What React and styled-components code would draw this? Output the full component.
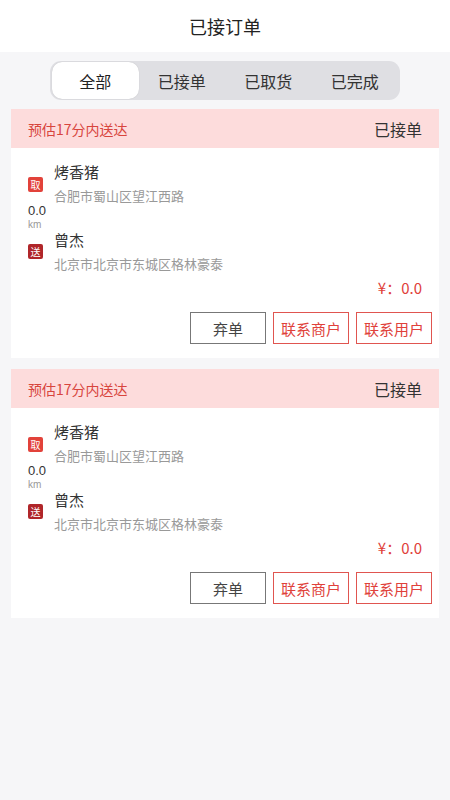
import React from "react";
import styled, { createGlobalStyle } from "styled-components";

const Global = createGlobalStyle`
  html, body { margin: 0; padding: 0; background: #f6f6f8; }
  body { font-family: "Noto Sans CJK SC", "Noto Sans", sans-serif; }
  * { box-sizing: border-box; }
`;

const Page = styled.div`
  min-height: 800px;
  background: #f6f6f8;
`;

const Header = styled.header`
  height: 52px;
  background: #fff;
  display: flex;
  align-items: center;
  justify-content: center;
  font-size: 18px;
  color: #222;
`;

const Tabs = styled.div`
  margin: 9px auto 0;
  width: 350px;
  height: 39px;
  background: #dfdfe3;
  border-radius: 11px;
  padding: 1px 2px;
  display: grid;
  grid-template-columns: repeat(4, 1fr);
`;

const Tab = styled.div`
  display: flex;
  align-items: center;
  justify-content: center;
  font-size: 16px;
  color: ${(p) => (p.$active ? "#222" : "#333")};
  background: ${(p) => (p.$active ? "#fff" : "transparent")};
  border-radius: 10px;
  box-shadow: ${(p) => (p.$active ? "0 0 1px rgba(0,0,0,0.2)" : "none")};
`;

const List = styled.div`
  display: flex;
  flex-direction: column;
  gap: 11px;
  padding: 9px 11px 0;
`;

const Card = styled.div`
  background: #fff;
`;

const CardHead = styled.div`
  height: 39px;
  background: #fddcdc;
  display: flex;
  align-items: center;
  justify-content: space-between;
  padding: 0 17px;
`;

const Eta = styled.span`
  font-size: 14px;
  color: #d8453d;
`;

const Status = styled.span`
  font-size: 16px;
  color: #333;
`;

const Body = styled.div`
  padding: 0 7px 14px 17px;
  display: flex;
  flex-direction: column;
`;

const Route = styled.div`
  display: flex;
`;

const Side = styled.div`
  width: 26px;
  padding-top: 29px;
  display: flex;
  flex-direction: column;
  align-items: flex-start;
`;

const Tag = styled.span`
  width: 15px;
  height: 15px;
  border-radius: 2px;
  background: ${(p) => p.$bg};
  color: #fff;
  font-size: 10px;
  line-height: 15px;
  text-align: center;
  margin-top: ${(p) => p.$mt || 0}px;
`;

const Dist = styled.span`
  margin-top: 12px;
  font-family: "Liberation Sans", Arial, sans-serif;
  font-size: 13px;
  line-height: 14px;
  color: #333;
`;

const Unit = styled.span`
  margin-top: 1px;
  font-family: "Liberation Sans", Arial, sans-serif;
  font-size: 10px;
  line-height: 12px;
  color: #999;
`;

const Info = styled.div`
  display: flex;
  flex-direction: column;
`;

const Name = styled.span`
  margin-top: ${(p) => p.$mt}px;
  font-size: 15px;
  line-height: 22px;
  color: #333;
`;

const Addr = styled.span`
  margin-top: 4px;
  font-size: 13px;
  line-height: 18px;
  color: #999;
`;

const Price = styled.div`
  margin-top: 4px;
  align-self: flex-end;
  padding-right: 10px;
  font-size: 15px;
  line-height: 22px;
  color: #e0413a;
`;

const Actions = styled.div`
  margin-top: 13px;
  display: flex;
  justify-content: flex-end;
  gap: 7px;
`;

const Btn = styled.button`
  width: 76px;
  height: 32px;
  background: #fff;
  border: 1px solid ${(p) => (p.$red ? "#e05550" : "#777")};
  color: ${(p) => (p.$red ? "#e0413a" : "#444")};
  font-family: inherit;
  font-size: 15px;
  padding: 0;
  border-radius: 0;
`;

function OrderCard() {
  return (
    <Card>
      <CardHead>
        <Eta>预估17分内送达</Eta>
        <Status>已接单</Status>
      </CardHead>
      <Body>
        <Route>
          <Side>
            <Tag $bg="#e2423a">取</Tag>
            <Dist>0.0</Dist>
            <Unit>km</Unit>
            <Tag $bg="#b0262a" $mt={13}>送</Tag>
          </Side>
          <Info>
            <Name $mt={13}>烤香猪</Name>
            <Addr>合肥市蜀山区望江西路</Addr>
            <Name $mt={24}>曾杰</Name>
            <Addr>北京市北京市东城区格林豪泰</Addr>
          </Info>
        </Route>
        <Price>¥：0.0</Price>
        <Actions>
          <Btn>弃单</Btn>
          <Btn $red>联系商户</Btn>
          <Btn $red>联系用户</Btn>
        </Actions>
      </Body>
    </Card>
  );
}

export default function App() {
  return (
    <Page>
      <Global />
      <Header>已接订单</Header>
      <Tabs>
        <Tab $active>全部</Tab>
        <Tab>已接单</Tab>
        <Tab>已取货</Tab>
        <Tab>已完成</Tab>
      </Tabs>
      <List>
        <OrderCard />
        <OrderCard />
      </List>
    </Page>
  );
}
